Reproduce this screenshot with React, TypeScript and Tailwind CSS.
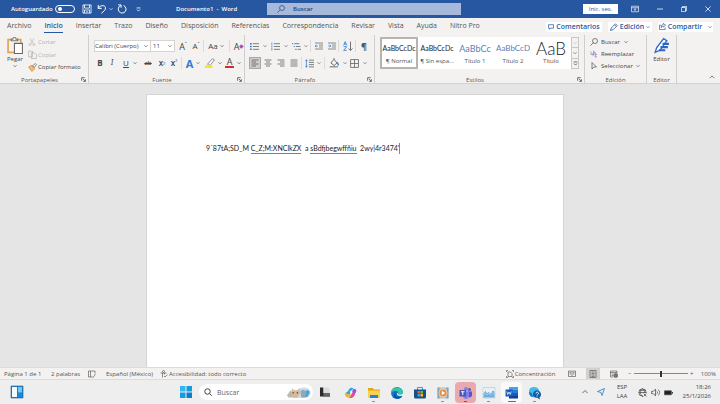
import type { ReactNode } from 'react';
import clsx from 'clsx';

/* ------------------------------------------------------------------ */
/*  Small building blocks                                              */
/* ------------------------------------------------------------------ */
function Icon({ className = 'h-3 w-3', box = 16, children }: { className?: string; box?: number; children: ReactNode }) {
  return (
    <svg
      viewBox={`0 0 ${box} ${box}`}
      className={clsx('shrink-0', className)}
      fill="none"
      stroke="currentColor"
      strokeWidth="1.3"
      aria-hidden="true"
    >
      {children}
    </svg>
  );
}

function Caret() {
  return (
    <Icon className="h-1 w-1" box={8}>
      <path d="M1 2.5 4 5.5l3-3" />
    </Icon>
  );
}

function Divider({ className }: { className?: string }) {
  return <span className={clsx('h-3 w-px shrink-0 bg-[#dcdbda]', className)} />;
}

function Tool({ label, className, children }: { label: string; className?: string; children: ReactNode }) {
  return (
    <button type="button" aria-label={label} className={clsx('flex h-3 shrink-0 items-center justify-center', className)}>
      {children}
    </button>
  );
}

function Launcher() {
  return (
    <Icon className="h-[5px] w-[5px]" box={8}>
      <path d="M1 6V1h5M3 3l4 4M7 3.5V7H3.5" />
    </Icon>
  );
}

function Group({
  title,
  className,
  launcher,
  children,
}: {
  title: string;
  className?: string;
  launcher?: boolean;
  children: ReactNode;
}) {
  return (
    <section className={clsx('flex shrink-0 flex-col border-r border-[#cfcecd]', className)}>
      <div className="flex-1">{children}</div>
      <div className="flex h-[7px] items-center">
        <h2 className="flex-1 text-center text-[6px] text-[#555]">{title}</h2>
        {launcher && (
          <span className="flex w-[9px] justify-center">
            <Launcher />
          </span>
        )}
      </div>
    </section>
  );
}

/* ------------------------------------------------------------------ */
/*  Title bar                                                          */
/* ------------------------------------------------------------------ */
function TitleBar() {
  return (
    <header className="flex h-[18px] items-center bg-[#2757a0] text-[7px] text-white">
      <div className="flex w-[267px] shrink-0 items-center pl-[11px]">
        <label htmlFor="autosave" className="w-[44px] text-[6px] font-semibold">Autoguardado</label>
        <span className="relative flex h-2 w-5 items-center">
          <input
            id="autosave"
            type="checkbox"
            role="switch"
            className="h-2 w-5 appearance-none rounded-full border border-white"
          />
          <span className="pointer-events-none absolute left-[3px] h-1 w-1 rounded-full bg-white" />
        </span>
        <Tool label="Guardar" className="ml-[6px] w-3">
          <Icon className="h-[10px] w-[10px]">
            <path d="M1.5 1.5h13v13h-13zM4 1.5v5h8v-5M4 14.5v-5h8v5M6.500 12.500h3" />
          </Icon>
        </Tool>
        <Tool label="Deshacer" className="ml-1 w-4 gap-[2px]">
          <Icon className="h-[10px] w-[10px]">
            <path d="M2 1.500v5.500h5.500M2 7C5 2 12 1 13.500 5.500 14.500 9.500 10 12 7 15" strokeWidth="1.6" />
          </Icon>
          <Caret />
        </Tool>
        <Tool label="Rehacer" className="ml-[3px] w-3">
          <Icon className="h-[10px] w-[10px]">
            <path d="M2 1.500h4.500V6M6 2.500A6.200 6.200 0 1 0 10.500 2.500" strokeWidth="1.6" />
          </Icon>
        </Tool>
        <Tool label="Personalizar barra" className="ml-[6px] w-2">
          <Icon className="h-[5px] w-[5px]" box={8}>
            <path d="M1 1.500h6M1.500 4 4 6.500 6.500 4" />
          </Icon>
        </Tool>
        <h1 className="ml-auto w-[91px] whitespace-pre text-[6px] font-semibold">Documento1  -  Word</h1>
      </div>
      <label className="flex h-3 w-[194px] items-center bg-[#a6b9db] pl-[10px] text-[#1f3f7d]">
        <Icon className="h-2 w-2">
          <circle cx="10" cy="6" r="5" />
          <path d="m6.500 9.500-6 6" />
        </Icon>
        <input
          aria-label="Buscar"
          placeholder="Buscar"
          className="ml-2 w-24 bg-transparent text-[6px] font-semibold outline-none placeholder:text-[#1f3f7d]"
        />
      </label>
      <div className="ml-auto flex items-center">
        <button type="button" className="mr-2 h-[10px] w-[35px] bg-white text-[6px] text-[#2757a0]">Inic. ses.</button>
        <Tool label="Presentación de la cinta" className="w-[18px]">
          <Icon className="h-2 w-2">
            <path d="M1 2.500h14v11H1zM1 5.500h14M8 12V7.500M5.500 9.500 8 7.500l2.500 2" />
          </Icon>
        </Tool>
        <Tool label="Minimizar" className="ml-1 w-6">
          <Icon className="h-[6px] w-[6px]"><path d="M0 8h16" strokeWidth="2" /></Icon>
        </Tool>
        <Tool label="Restaurar" className="w-6">
          <Icon className="h-[6px] w-[6px]">
            <path d="M1 4h11v11H1zM4 4V1h11v11h-3" strokeWidth="2" />
          </Icon>
        </Tool>
        <Tool label="Cerrar" className="w-6">
          <Icon className="h-[6px] w-[6px]"><path d="m1 1 14 14M15 1 1 15" strokeWidth="2" /></Icon>
        </Tool>
      </div>
    </header>
  );
}

/* ------------------------------------------------------------------ */
/*  Ribbon tabs                                                        */
/* ------------------------------------------------------------------ */
const tabs = [
  'Archivo', 'Inicio', 'Insertar', 'Trazo', 'Diseño', 'Disposición',
  'Referencias', 'Correspondencia', 'Revisar', 'Vista', 'Ayuda', 'Nitro Pro',
];

function TabBar() {
  return (
    <nav className="flex h-[17px] items-center pl-[7px] text-[7px] text-[#555]">
      <div className="flex gap-[13px]">
        {tabs.map((tab) => (
          <a
            key={tab}
            href="#"
            className={clsx(
              'whitespace-nowrap border-b leading-[12px]',
              tab === 'Inicio' ? 'border-[#2757a0] font-semibold text-[#2757a0]' : 'border-transparent',
            )}
          >
            {tab}
          </a>
        ))}
      </div>
      <div className="ml-auto flex gap-[6px] pr-[7px] font-semibold text-[#2757a0]">
        <button type="button" className="flex h-[10px] w-[56px] items-center justify-center gap-[2px] bg-white">
          <Icon className="h-[6px] w-[6px]"><path d="M1 2h14v9H7l-3 3v-3H1z" strokeWidth="2" /></Icon>
          Comentarios
        </button>
        <button type="button" className="flex h-[10px] w-[44px] items-center justify-center gap-[2px] bg-white">
          <Icon className="h-2 w-2"><path d="m1 15 1.500-5L11 1.500l3.500 3.500L6 13.500zM9 3.500 12.500 7" strokeWidth="1.600" /></Icon>
          Edición
          <Caret />
        </button>
        <button type="button" className="flex h-[10px] w-[55px] items-center justify-center gap-[2px] bg-white">
          <Icon className="h-[7px] w-[7px]">
            <path d="M5 5H1v10h13v-5M10 1l5 4-5 4V7C7 7 5.500 8.500 5 11c0-5 2-8 5-8z" strokeWidth="1.600" />
          </Icon>
          Compartir
          <span className="ml-1"><Caret /></span>
        </button>
      </div>
    </nav>
  );
}

/* ------------------------------------------------------------------ */
/*  Ribbon groups                                                      */
/* ------------------------------------------------------------------ */
function ClipboardGroup() {
  return (
    <Group title="Portapapeles" launcher className="w-[89px]">
      <div className="flex">
        <button type="button" className="flex w-[28px] flex-col items-center pl-[2px] text-[#444]">
          <Icon className="mt-[2px] h-[17px] w-[17px]" box={32}>
            <path d="M14 29H2V5h6M20 5h6v6" stroke="#e3a14b" strokeWidth="3" />
            <path d="M8 7V4h3c0-4 6-4 6 0h3v3z" fill="#fff" stroke="#777" strokeWidth="2" />
            <path d="M14 12h15v19H14z" fill="#fff" stroke="#666" strokeWidth="2" />
          </Icon>
          <span className="text-[6px] leading-[10px]">Pegar</span>
          <Caret />
        </button>
        <div className="flex flex-col items-start pt-px text-[6px] leading-[12px]">
          <button type="button" disabled className="flex h-3 items-center gap-[2px] text-[#b5b3b1]">
            <Icon className="h-2 w-2">
              <path d="m4 1 6 10M12 1 6 11" />
              <circle cx="4" cy="13" r="2" />
              <circle cx="12" cy="13" r="2" />
            </Icon>
            Cortar
          </button>
          <button type="button" disabled className="flex h-[13px] items-center gap-px text-[#b5b3b1]">
            <Icon className="h-[9px] w-[9px]"><path d="M1 2h7v10H1zM6 5h5l4 3v7H6z" /></Icon>
            Copiar
          </button>
          <button type="button" className="flex h-3 items-center gap-px text-[#444]">
            <Icon className="h-[9px] w-[9px]">
              <path d="M1 7 7 4l5 6-5 5z" fill="#f3bd73" stroke="#d98624" />
              <path d="m8 5 5-4 2 2-4 5z" fill="#fff" stroke="#555" />
            </Icon>
            Copiar formato
          </button>
        </div>
      </div>
    </Group>
  );
}

function FontGroup() {
  return (
    <Group title="Fuente" launcher className="w-[156px]">
      <div className="flex items-center pt-[5px] pl-[5px] text-[#444]">
        <label className="flex h-3 w-[57px] items-center border border-[#d5d4d3] bg-white pr-[2px]">
          <select aria-label="Fuente" className="min-w-0 flex-1 appearance-none text-[6px] leading-[8px]">
            <option>Calibri (Cuerpo)</option>
          </select>
          <Caret />
        </label>
        <label className="flex h-3 w-6 items-center border border-l-0 border-[#d5d4d3] bg-white pr-[2px] pl-[2px]">
          <select aria-label="Tamaño de fuente" className="min-w-0 flex-1 appearance-none text-[6px] leading-[8px]">
            <option>11</option>
          </select>
          <Caret />
        </label>
        <Tool label="Aumentar tamaño" className="ml-[2px] w-3 text-[9px]">A<sup className="text-[5px]">ˆ</sup></Tool>
        <Tool label="Disminuir tamaño" className="ml-px w-3 text-[8px]">A<sup className="text-[5px]">ˇ</sup></Tool>
        <Divider className="ml-px" />
        <Tool label="Cambiar mayúsculas" className="ml-1 w-4 gap-[2px] text-[8px]">Aa<Caret /></Tool>
        <Divider className="ml-[5px]" />
        <Tool label="Borrar formato" className="ml-1 w-[10px] text-[9px]">
          A<span className="text-[6px] text-[#a44fb5]">◆</span>
        </Tool>
      </div>
      <div className="flex items-center pt-[5px] pl-[5px] text-[8px] text-[#444]">
        <Tool label="Negrita" className="w-3 font-bold">B</Tool>
        <Tool label="Cursiva" className="w-3 font-serif italic">I</Tool>
        <Tool label="Subrayado" className="w-5 gap-1 pl-1"><u>U</u><Caret /></Tool>
        <Tool label="Tachado" className="ml-1 w-3 text-[6px] font-semibold"><s>ab</s></Tool>
        <Tool label="Subíndice" className="ml-[2px] w-3 font-semibold">x<sub className="text-[4px] text-[#2b7cd3]">2</sub></Tool>
        <Tool label="Superíndice" className="w-3 font-semibold">x<sup className="text-[4px] text-[#2b7cd3]">2</sup></Tool>
        <Divider className="ml-px" />
        <Tool label="Efectos de texto" className="ml-1 w-[14px] gap-[3px] text-[11px] font-bold text-[#2b7cd3]">
          A<span className="text-[#555]"><Caret /></span>
        </Tool>
        <Tool label="Resaltado" className="ml-[5px] w-4 gap-[3px]">
          <Icon className="h-[10px] w-[10px]">
            <path d="m4 10 8-9 3 2-7 9z" fill="#fff" stroke="#777" />
            <path d="M0 12h12v4H0z" fill="#f4e71e" stroke="none" />
          </Icon>
          <Caret />
        </Tool>
        <Tool label="Color de fuente" className="ml-1 w-4 gap-[3px]">
          <span className="w-[9px] border-b-2 border-[#e0242b] text-center text-[9px] leading-[8px]">A</span>
          <Caret />
        </Tool>
      </div>
    </Group>
  );
}

const alignments = [
  { label: 'Alinear a la izquierda', d: 'M1 2h14M1 6h9M1 10h14M1 14h9' },
  { label: 'Centrar', d: 'M1 2h14M4 6h8M1 10h14M4 14h8' },
  { label: 'Alinear a la derecha', d: 'M1 2h14M6 6h9M1 10h14M6 14h9' },
  { label: 'Justificar', d: 'M1 2h14M1 6h14M1 10h14M1 14h14' },
];

function ParagraphGroup() {
  return (
    <Group title="Párrafo" launcher className="w-[130px]">
      <div className="flex items-center pt-[5px] pl-1 text-[#555]">
        <Tool label="Viñetas" className="w-[18px] gap-1">
          <Icon className="h-[9px] w-[9px]">
            <path d="M5 3h11M5 8h11M5 13h11" />
            <path d="M0 3h3M0 8h3M0 13h3" stroke="#2b7cd3" strokeWidth="2.500" />
          </Icon>
          <Caret />
        </Tool>
        <Tool label="Numeración" className="ml-[3px] w-[18px] gap-1">
          <Icon className="h-[9px] w-[9px]">
            <path d="M5 3h11M5 8h11M5 13h11" />
            <path d="M1.500 1v4M1.500 6v4M1.500 11v4" stroke="#2b7cd3" />
          </Icon>
          <Caret />
        </Tool>
        <Tool label="Lista multinivel" className="ml-[3px] w-[18px] gap-[3px]">
          <Icon className="h-[9px] w-[9px]">
            <path d="M4 3h9M7 8h8M10 13h6" />
            <path d="M0 3h2M3 8h2M6 13h2" stroke="#2b7cd3" strokeWidth="2" />
          </Icon>
          <Caret />
        </Tool>
        <Divider className="ml-px" />
        <Tool label="Disminuir sangría" className="ml-[2px] w-3">
          <Icon className="h-2 w-2">
            <path d="M0 2h16M8 6h8M8 10h8M0 14h16" />
            <path d="M6 8H0M3 5.500 0 8l3 2.500" stroke="#2b7cd3" />
          </Icon>
        </Tool>
        <Tool label="Aumentar sangría" className="ml-px w-3">
          <Icon className="h-2 w-2">
            <path d="M0 2h16M8 6h8M8 10h8M0 14h16" />
            <path d="M0 8h6M3 5.500 6 8l-3 2.500" stroke="#2b7cd3" />
          </Icon>
        </Tool>
        <Divider />
        <Tool label="Ordenar" className="ml-[3px] w-3">
          <Icon className="h-[10px] w-[10px]">
            <path d="M1 7 3.500 1 6 7M2 5h3M1 9h5l-5 6h5" stroke="#2b7cd3" />
            <path d="M12 1v14M9 12l3 3 3-3" />
          </Icon>
        </Tool>
        <Divider className="ml-px" />
        <Tool label="Mostrar todo" className="ml-[2px] w-3 text-[9px] font-bold">¶</Tool>
      </div>
      <div className="flex items-center pt-[5px] pl-1 text-[#555]">
        <div className="flex gap-px">
          {alignments.map((item, i) => (
            <Tool
              key={item.label}
              label={item.label}
              className={clsx('w-3', i === 0 && 'border border-[#a9a8a7] bg-[#cfcdcb]')}
            >
              <Icon className="h-2 w-2"><path d={item.d} strokeWidth="1.500" /></Icon>
            </Tool>
          ))}
        </div>
        <Divider className="ml-px" />
        <Tool label="Interlineado" className="ml-[3px] w-4 gap-[3px]">
          <Icon className="h-[9px] w-[9px]">
            <path d="M7 2h9M7 6h9M7 10h9M7 14h9" />
            <path d="M2.500 1v14M0.500 4l2-2.500 2 2.500M0.500 12l2 2.500 2-2.500" stroke="#2b7cd3" />
          </Icon>
          <Caret />
        </Tool>
        <Divider className="ml-[3px]" />
        <Tool label="Sombreado" className="ml-1 w-[18px] gap-1">
          <Icon className="h-[10px] w-[10px]">
            <path d="m3 8 5-6 5 6-5 4zM8 2V0" />
            <path d="M13 7c2 2 2 4 1 5" stroke="#2b7cd3" strokeWidth="2" />
            <path d="M1 14h13" stroke="#999" strokeWidth="2.500" />
          </Icon>
          <Caret />
        </Tool>
        <Tool label="Bordes" className="ml-[2px] w-[18px] gap-1">
          <Icon className="h-[9px] w-[9px]"><path d="M1 1h14v14H1zM8 1v14M1 8h14" /></Icon>
          <Caret />
        </Tool>
      </div>
    </Group>
  );
}

const styles = [
  { name: '¶ Normal', sample: 'AaBbCcDc', look: 'text-[7px] text-[#222]' },
  { name: '¶ Sin espa...', sample: 'AaBbCcDc', look: 'text-[7px] text-[#222]' },
  { name: 'Título 1', sample: 'AaBbCc', look: 'text-[9px] text-[#5b7fb8]' },
  { name: 'Título 2', sample: 'AaBbCcD', look: 'text-[8px] text-[#5b7fb8]' },
  { name: 'Título', sample: 'AaB', look: 'text-[17px] font-light text-[#222]' },
];

function StylesGroup() {
  return (
    <Group title="Estilos" launcher className="w-[210px]">
      <div className="mt-[2px] ml-[5px] flex h-8 w-[199px] bg-white">
        {styles.map((style, i) => (
          <button
            type="button"
            key={style.name}
            className={clsx(
              'flex w-[38px] flex-col items-center overflow-hidden border-2 font-[Lato]',
              i === 0 ? 'border-[#b5b4b3]' : 'border-transparent',
            )}
          >
            <span className={clsx('flex h-[18px] w-full items-center justify-center whitespace-nowrap', style.look)}>
              {style.sample}
            </span>
            <span className="whitespace-nowrap font-['Open_Sans'] text-[6px] leading-[9px] text-[#555]">{style.name}</span>
          </button>
        ))}
        <div className="ml-auto flex w-2 flex-col border border-[#c8c7c6] bg-[#f3f2f1] text-[#555]">
          <Tool label="Subir" className="flex-1 text-[#bbb]"><Caret /></Tool>
          <Tool label="Bajar" className="flex-1 border-y border-[#c8c7c6]"><Caret /></Tool>
          <Tool label="Más estilos" className="flex-1">
            <Icon className="h-[5px] w-[5px]" box={8}><path d="M1 1.500h6M1.500 4 4 6.500 6.500 4" /></Icon>
          </Tool>
        </div>
      </div>
    </Group>
  );
}

function EditingGroup() {
  return (
    <Group title="Edición" className="w-[62px]">
      <div className="flex flex-col items-start pt-px pl-[5px] text-[6px] text-[#444]">
        <button type="button" className="flex h-3 items-center gap-[3px]">
          <Icon className="h-2 w-2">
            <circle cx="10" cy="6" r="5" />
            <path d="m6.500 9.500-6 6" />
          </Icon>
          Buscar
          <span className="ml-px"><Caret /></span>
        </button>
        <button type="button" className="flex h-3 items-center gap-[3px]">
          <Icon className="h-2 w-2">
            <path d="M7 1v7h3.500V4.500H7M2 3v6h6M5 6.500 8 9l-3 2.500" stroke="#6f87c4" />
            <path d="M14 9h-3.500v5H14" stroke="#a44fb5" />
          </Icon>
          Reemplazar
        </button>
        <button type="button" className="flex h-3 items-center gap-[3px]">
          <Icon className="h-2 w-2"><path d="M4 1v13l3.500-4H13z" /></Icon>
          Seleccionar
          <Caret />
        </button>
      </div>
    </Group>
  );
}

function Ribbon() {
  return (
    <div className="flex h-[49px] border-b border-[#d3d2d1] text-[#555]">
      <ClipboardGroup />
      <FontGroup />
      <ParagraphGroup />
      <StylesGroup />
      <EditingGroup />
      <Group title="Editor" className="w-[30px]">
        <button type="button" className="flex w-full flex-col items-center text-[#444]">
          <Icon className="mt-[2px] h-[17px] w-[17px]" box={32}>
            <path d="M4 29 7 20 20 3l6 4-13 18z" fill="#fff" stroke="#2b66c4" strokeWidth="2.500" />
            <path d="M18 13h12M14 19h14M11 25h12" stroke="#2b66c4" strokeWidth="4" />
          </Icon>
          <span className="text-[6px] leading-[10px]">Editor</span>
        </button>
      </Group>
      <div className="ml-auto flex items-end pr-[5px]">
        <Tool label="Contraer la cinta" className="h-2">
          <Icon className="h-[6px] w-[6px]"><path d="m2 11 6-6 6 6" strokeWidth="2" /></Icon>
        </Tool>
      </div>
    </div>
  );
}

/* ------------------------------------------------------------------ */
/*  Document                                                           */
/* ------------------------------------------------------------------ */
function Document() {
  return (
    <main className="flex flex-1 justify-center bg-[#e5e5e5] pt-[10px] pr-[10px]">
      <article className="w-[418px] max-w-full border border-b-0 border-[#d4d4d4] bg-white pt-12 pr-[58px] pl-[59px]">
        <p className="flex whitespace-pre font-[Lato] text-[7px] leading-[10px] text-[#222]">
          <span>9´87tA;SD_M </span>
          <span className="border-b border-[#e05555]">C_Z;M:XNClkZX</span>
          <span>  a </span>
          <span className="border-b border-[#e05555]">sBdfjbegwffñiu</span>
          <span className="border-r border-[#888]">  2wy|4r3474'</span>
        </p>
      </article>
    </main>
  );
}

/* ------------------------------------------------------------------ */
/*  Status bar                                                         */
/* ------------------------------------------------------------------ */
function StatusBar() {
  return (
    <footer className="flex h-[13px] items-center border-y border-[#dddcdb] bg-[#f3f2f1] pr-1 pl-1 text-[6px] text-[#555]">
      <span className="w-[47px]">Página 1 de 1</span>
      <span className="w-[37px]">2 palabras</span>
      <Icon className="h-2 w-2"><path d="M8 14H1V2h13v5M5 2v12M8 13l2 2 5-7" /></Icon>
      <span className="ml-[10px] w-[54px]">Español (México)</span>
      <Icon className="h-2 w-2">
        <circle cx="7" cy="3" r="2" />
        <path d="M1 6h12M5 6v9M9 6v3M8 12l2 2 5-5" />
      </Icon>
      <span className="ml-px">Accesibilidad: todo correcto</span>
      <div className="ml-auto flex items-center">
        <Icon className="h-2 w-2"><path d="M1 4V1h3M12 1h3v3M1 12v3h3M15 12v3h-3M4 4h5l3 3v6H4z" /></Icon>
        <span className="ml-px w-[51px]">Concentración</span>
        <Tool label="Modo de lectura" className="w-3">
          <Icon className="h-2 w-2"><path d="M1 2h6l1 1 1-1h6v11H9l-1 1-1-1H1zM8 3v10M3 5h3M3 8h3M10 5h3M10 8h3" /></Icon>
        </Tool>
        <Tool label="Diseño de impresión" className="ml-2 h-[11px] w-[14px] bg-[#d2d1d0]">
          <Icon className="h-2 w-2"><path d="M2 1h12v14H2zM5 4h6M5 7h6M5 10h6M5 13h6" /></Icon>
        </Tool>
        <Tool label="Diseño web" className="ml-2 w-3">
          <Icon className="h-2 w-2">
            <path d="M7 14H1V2h13v4M1 5h13M3 8h4M3 11h3" />
            <circle cx="11.500" cy="11" r="4" fill="#777" />
          </Icon>
        </Tool>
        <button type="button" aria-label="Alejar" className="ml-[6px] w-2">−</button>
        <input
          type="range"
          aria-label="Zoom"
          min="10"
          max="190"
          defaultValue="100"
          className="h-2 w-[54px] appearance-none bg-[linear-gradient(#888,#888)] bg-[length:100%_1px] bg-center bg-no-repeat [&::-webkit-slider-thumb]:h-[6px] [&::-webkit-slider-thumb]:w-[2px] [&::-webkit-slider-thumb]:appearance-none [&::-webkit-slider-thumb]:bg-[#333]"
        />
        <button type="button" aria-label="Acercar" className="w-2">+</button>
        <span className="ml-[5px]">100%</span>
      </div>
    </footer>
  );
}

/* ------------------------------------------------------------------ */
/*  Taskbar                                                            */
/* ------------------------------------------------------------------ */
type TaskApp = { label: string; art: ReactNode; mark?: string; tile?: string };

const apps: TaskApp[] = [
  {
    label: 'Copilot',
    art: (
      <>
        <path d="M8 11C4 11 3 16 7 17h5l3-8c1-3 3-3 4-3-2-4-9-4-11 5z" fill="#2aa8e0" />
        <path d="M5 12c-5 2-4 10 3 11 5 0 6-6 8-8-3 1-6 3-9 2-2-1-3-3-2-5z" fill="#f2b52c" />
        <path d="M19 6c6-1 7 4 4 8l-4 5-5-3 3-7c0-2 1-3 2-3z" fill="#a14fe0" />
        <path d="M9 23c7 3 12-1 13-7-3-1-6-1-7 1-2 3-3 6-6 6z" fill="#ec4c83" />
        <path d="m12 10 4-1 1 5-4 3z" fill="#f5f5f5" />
      </>
    ),
  },
  {
    label: 'Explorador de archivos',
    mark: 'w-[3px] bg-[#888]',
    art: (
      <>
        <path d="M2 4h9l3 3h12v17H2z" fill="#e5a21b" />
        <path d="M2 9h24v15H2z" fill="#fbd04c" />
        <path d="M6 18h16v6H6z" fill="#2a7fd6" />
      </>
    ),
  },
  {
    label: 'Edge',
    art: (
      <>
        <circle cx="14" cy="14" r="12" fill="#1575cc" />
        <path d="M2 14C2 0 26-1 26 13c0 5-8 6-10 3 3-6-7-10-14-2z" fill="#35c6a5" />
        <path d="M13 12c-5 3-2 11 5 10 3 0 5-1 7-2-6 9-18 6-17-2 0-3 2-5 5-6z" fill="#0c4a9b" />
        <path d="M16 16c3 3 10 1 10-2v5c-4 2-12 1-12-3 0-2 3-3 2 0z" fill="#f4f8fb" />
      </>
    ),
  },
  {
    label: 'Microsoft Store',
    art: (
      <>
        <path d="M9 8V3h10v5" fill="none" stroke="#3a9be0" strokeWidth="2" />
        <path d="M2 7h24v15q0 3-3 3H5q-3 0-3-3z" fill="#1b4f83" />
        <path d="M9 10h5v5H9z" fill="#ee5a36" />
        <path d="M15 10h5v5h-5z" fill="#82bc29" />
        <path d="M9 16h5v5H9z" fill="#27a5e8" />
        <path d="M15 16h5v5h-5z" fill="#fbbb20" />
      </>
    ),
  },
  {
    label: 'Reproductor',
    mark: 'w-[3px] bg-[#888]',
    art: (
      <>
        <path d="M3 3h22v22H3z" fill="#b5c3ca" />
        <path d="M3 3h4v22H3zM21 3h4v22h-4z" fill="#8fa3ad" />
        <circle cx="14" cy="14" r="8" fill="#e98a3c" stroke="#fff" />
        <path d="m11.500 9.500 7 4.500-7 4.500z" fill="#fff" />
      </>
    ),
  },
  {
    label: 'Teams',
    tile: 'bg-[#e9a9ad]',
    mark: 'w-[3px] bg-[#c4392e]',
    art: (
      <>
        <circle cx="21" cy="7" r="3" fill="#5059c9" />
        <circle cx="14" cy="6" r="4" fill="#7b83eb" />
        <path d="M18 11h8v8q-1 4-6 4z" fill="#5059c9" />
        <path d="M8 11h12v9q-1 6-6 6t-6-6z" fill="#7b83eb" />
        <path d="M1 8h13v13H1z" fill="#4b53bc" />
        <path d="M4 11.500h7M7.500 11.500V18" stroke="#fff" strokeWidth="2" />
      </>
    ),
  },
  {
    label: 'Monitor',
    mark: 'w-[3px] bg-[#888]',
    art: (
      <>
        <path d="M2 3h24v21H2z" fill="#e5f1f8" stroke="#a4bfce" />
        <path d="M3 23v-4l4-5 3 4 4-3 4 4 4-6 3 4v6z" fill="#6db0e0" />
        <path d="m3 17 4-6 3 5 4-3 4 4 4-7 3 5" fill="none" stroke="#3788c8" strokeWidth="1.500" />
      </>
    ),
  },
  {
    label: 'Word',
    tile: 'bg-[#fafafa]',
    mark: 'w-2 bg-[#2179c9]',
    art: (
      <>
        <path d="M8 2h18v6H8z" fill="#41a5ee" />
        <path d="M8 8h18v6H8z" fill="#2b7cd3" />
        <path d="M8 14h18v6H8z" fill="#185abd" />
        <path d="M8 20h18v5H8z" fill="#103f91" />
        <path d="M1 7h14v14H1z" fill="#185abd" />
        <path d="m3.500 11 2 6 2.500-5 2.500 5 2-6" fill="none" stroke="#fff" strokeWidth="1.500" />
      </>
    ),
  },
  {
    label: 'Obtener ayuda',
    mark: 'w-[3px] bg-[#888]',
    art: (
      <>
        <path d="M2 10c0-10 18-11 20-2l-5 14c-8 3-15-4-15-12z" fill="#40bbec" />
        <path d="M2 12c4-1 7 4 8 10C5 22 2 18 2 12z" fill="#1679c8" />
        <path d="M10 17a8 8 0 1 1 13 6l1 4-5-3c-5 0-9-3-9-7z" fill="#105a9e" />
        <path d="M16 15c0-4 5-3 5 0 0 2-3 2-3 4M18 21v1.500" fill="none" stroke="#fff" strokeWidth="2" />
      </>
    ),
  },
];

function Taskbar() {
  return (
    <nav className="grid h-6 grid-cols-[1fr_auto_1fr] items-center bg-[#eeeeee] text-[#444]">
      <button type="button" aria-label="Widgets" className="ml-[10px] w-[14px]">
        <Icon className="h-[14px] w-[14px]" box={28}>
          <path d="M2 2h24v24H2z" fill="#1c77bd" stroke="#2670a4" />
          <path d="M4 4h10v20H4z" fill="#f7fbfd" stroke="none" />
          <path d="M16 4h8v11h-8z" fill="#69cdf2" stroke="none" />
          <path d="M16 16h8v8h-8z" fill="#1a8bdc" stroke="none" />
        </Icon>
      </button>

      <div className="flex items-center">
        <Tool label="Inicio" className="w-6">
          <Icon className="h-3 w-3" box={24}>
            <path d="M0 0h11v11H0z" fill="#35b6ef" stroke="none" />
            <path d="M13 0h11v11H13zM0 13h11v11H0z" fill="#159cdf" stroke="none" />
            <path d="M13 13h11v11H13z" fill="#0b7dcb" stroke="none" />
          </Icon>
        </Tool>
        <label className="ml-px flex h-4 w-[114px] items-center rounded-full bg-white pr-[2px] pl-[5px]">
          <Icon className="h-2 w-2">
            <circle cx="7" cy="7" r="5.500" strokeWidth="2" />
            <path d="m11 11 4.500 4.500" strokeWidth="2" />
          </Icon>
          <input
            aria-label="Buscar en Windows"
            placeholder="Buscar"
            className="ml-[5px] min-w-0 flex-1 text-[7px] outline-none placeholder:text-[#666]"
          />
          <svg viewBox="0 0 52 26" className="h-3 w-6 shrink-0" aria-hidden="true">
            <path d="M22 12c5-12 27-12 29 2 0 8-6 12-14 12H17z" fill="#c5dff0" />
            <path d="M0 20 8 9l5 8 4-4 6 12H3z" fill="#bbb9b0" />
            <path d="m11 5 4 4h8l4-5 1 12-5 9H13l-4-9z" fill="#d8b89b" />
            <path d="M12 13h3v3h-3zM21 13h3v3h-3z" fill="#6b5b50" />
            <path d="M29 14c0-8 12-8 12 0l-2 11h-8z" fill="#9aa6ad" />
            <path d="M41 10c5-3 9 1 8 5l-5 9h-5z" fill="#4da2d8" />
          </svg>
        </label>
        <Tool label="Vista de tareas" className="w-6">
          <Icon className="h-[10px] w-[10px]" box={20}>
            <path d="M0 1h7v11h13v7H0z" fill="#2b2b2b" stroke="none" />
            <path d="M7 12h13v7H7z" fill="#666" stroke="none" />
            <path d="M7 1h12v11H7z" fill="#dcdcdc" stroke="none" />
          </Icon>
        </Tool>
        <div className="ml-[2px] flex">
          {apps.map((app) => (
            <button type="button" key={app.label} aria-label={app.label} className="flex w-[23px] justify-center">
              <span className={clsx('flex h-[21px] w-[21px] flex-col items-center rounded-sm pt-1', app.tile)}>
                <svg viewBox="0 0 28 28" className="h-[14px] w-[14px] shrink-0" aria-hidden="true">{app.art}</svg>
                <span className={clsx('mt-px h-px shrink-0 rounded-full', app.mark)} />
              </span>
            </button>
          ))}
        </div>
      </div>

      <div className="flex items-center justify-end pr-[9px] text-[6px] leading-[9px]">
        <Icon className="h-[6px] w-[6px]"><path d="m1 11 7-7 7 7" strokeWidth="2" /></Icon>
        <Icon className="ml-[9px] h-2 w-2 text-[#2878bd]"><path d="M15 1 1 7l7 2 2 6z" strokeWidth="1.600" /></Icon>
        <button type="button" className="ml-[10px] w-[14px] text-center">ESP LAA</button>
        <Icon className="ml-[9px] h-[9px] w-[9px]">
          <circle cx="8" cy="8" r="6.500" />
          <path d="M1.500 8h13M8 1.500C3 5 3 11 8 14.500M8 1.500c5 3.500 5 9.500 0 13M3 4h10" />
          <path d="M9 9h7v7H9z" fill="#eee" stroke="none" />
          <path d="m10 10 5 5M15 10l-5 5" />
        </Icon>
        <Icon className="ml-1 h-[9px] w-[9px]">
          <path d="M1 6h3l4-4v12l-4-4H1zM10 5.500c2 1 2 4 0 5M12.500 3c4 3 4 7 0 10" />
        </Icon>
        <Icon className="ml-1 h-[9px] w-[9px]">
          <path d="M1 5h12v7H1z" fill="#222" />
          <path d="M15 7v3" strokeWidth="2" />
        </Icon>
        <time className="ml-[7px] w-[31px] whitespace-nowrap text-right">
          18:26
          <br />
          25/1/2026
        </time>
      </div>
    </nav>
  );
}

/* ------------------------------------------------------------------ */
/*  App                                                                */
/* ------------------------------------------------------------------ */
export default function App() {
  return (
    <div className="flex min-h-screen flex-col bg-[#f3f2f1] font-['Open_Sans',sans-serif] leading-none">
      <TitleBar />
      <TabBar />
      <Ribbon />
      <Document />
      <StatusBar />
      <Taskbar />
    </div>
  );
}
